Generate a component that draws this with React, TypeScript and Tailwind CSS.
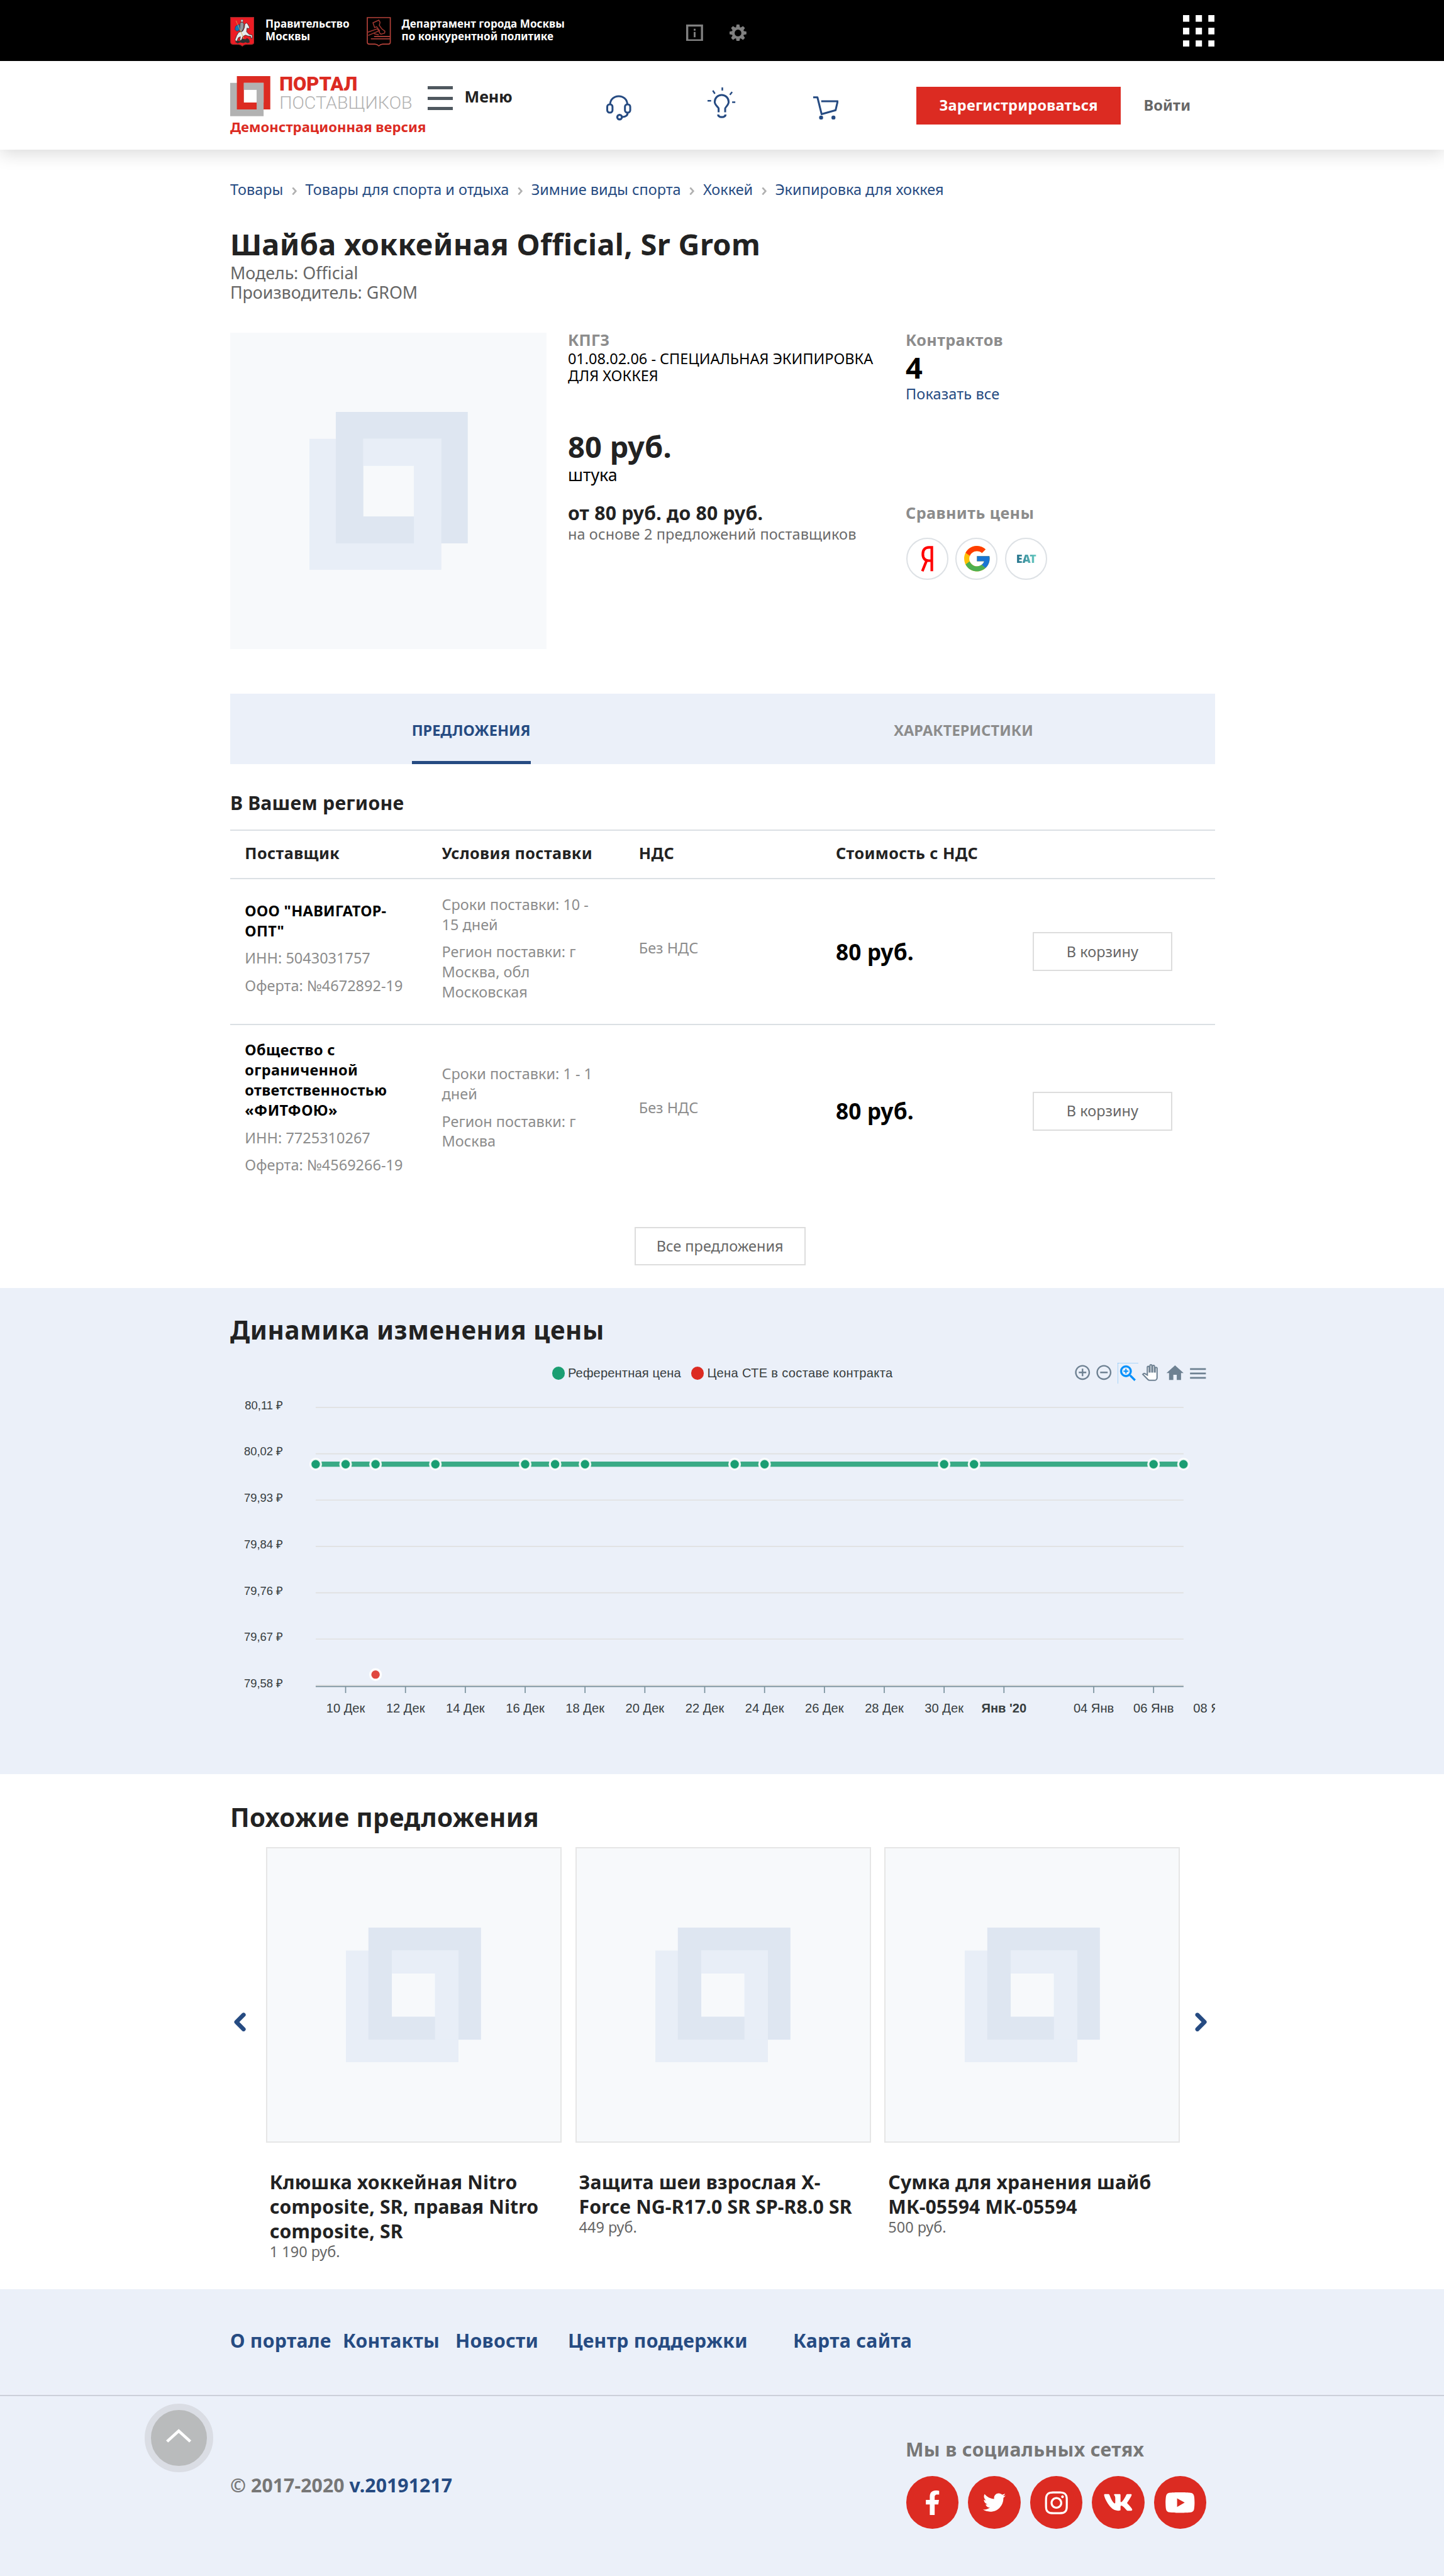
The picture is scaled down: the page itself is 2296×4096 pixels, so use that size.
import React from "react";
import { FaFacebookF, FaInstagram, FaTwitter, FaVk, FaYoutube } from "react-icons/fa";
import { FcGoogle } from "react-icons/fc";
import { MdAddCircleOutline, MdHome, MdMenu, MdRemoveCircleOutline, MdZoomIn } from "react-icons/md";

function Squares({ size, front, back }: { size: number; front: string; back: string }) {
  return (
    <svg width={size} height={size} viewBox="0 0 150 150" shapeRendering="geometricPrecision" className="block shrink-0">
      <path fill={back} fillRule="evenodd" d="M0 25.5H125V150H0ZM51 51V99H99V51Z" />
      <path fill={front} fillRule="evenodd" d="M25 0H150V124.5H25ZM51 25.5V99H125V25.5Z" />
      <path fill={back} d="M51 25.5H125V124.5H99V51H51Z" />
    </svg>
  );
}

function CityCoat() {
  return (
    <svg width="23" height="28" viewBox="0 0 23 28" className="block shrink-0">
      <path d="M.4.4h22.2v23.2q0 2.2-2.4 2.4h-5.4q-2 .2-3.3 1.6-1.3-1.4-3.3-1.6H2.8Q.4 25.8 .4 23.6Z" fill="#ed1c24" stroke="#9c2a2a" strokeWidth=".7" />
      <path d="M4.600 21.500l1.600-4L8 14.500l4-1.200 1.500-3.300L13.800 7l1.500-1.500 1.500 1.500 1.600 3-1.200 1-1.200-.5-.5 3.500 2.500 2.500 2.800.5.200 3-1.200.3-.3-2-2.700-.3-2.300-.8-2.500 1.300-1 3 .5 1.500-1.500.2-.8-2 .5-2.500-2 1-1 2.500-1.200 1z" fill="#e8eaec" stroke="#2a2a2a" strokeWidth=".5" />
      <path d="M5 9l3-2 2 1.500L9.500 12l-3 1.500L4.500 12z" fill="#1479b8" stroke="#153a55" strokeWidth=".4" />
      <path d="M9.500 5.500l2-.8 1.500 1.800-.3 4-1.700 3.500-2-1z" fill="#8e959c" stroke="#2a2a2a" strokeWidth=".4" />
      <circle cx="11.200" cy="3.600" r="1.200" fill="#cfd3d6" stroke="#2a2a2a" strokeWidth=".3" />
      <path d="M5.500 3.500l7.500 17" stroke="#d8b24a" strokeWidth=".5" />
      <path d="M4.500 23.500l3-1.200 1.500.7 2.500-2.300 3 .5 1.500-1.200 2 1.500.5 2.500-2 .8-2-.8-2 .8-3-.6-2.500.8z" fill="#2c2f30" />
    </svg>
  );
}

function DepartmentCoat() {
  return (
    <svg width="23" height="28" viewBox="0 0 23 28" fill="none" stroke="#b5423a" className="block shrink-0">
      <path d="M.6.6h21.800v23.400q0 1.600-1.800 1.700h-5.400q-2.200.2-3.700 1.700-1.500-1.500-3.700-1.700H2.400Q.6 25.600.6 24Z" strokeWidth="1" />
      <path d="M6 5.500l5.500-2.500 1.200 2-.7 3 2.300 3.200 3 2.300-.3 1.800-3.500 1-1.500-1.600.2-1.700-2.700-3.700-2 .7z" strokeWidth=".9" stroke="#a03730" />
      <path d="M1 14.500l9-3.300 1.500 2L1.500 17.500M7 15.800l4.500 1.200" strokeWidth=".9" stroke="#a03730" />
      <path d="M7 18.500h15M4 20.700h18" strokeWidth="1" />
    </svg>
  );
}

function InfoIcon() {
  return (
    <svg width="16" height="16" viewBox="0 0 16 16" className="block">
      <path d="M1 1h14v14H1z" fill="none" stroke="#808080" strokeWidth="2" />
      <path d="M7.200 7h1.700v5H7.200zM7.200 4h1.700v1.800H7.200z" fill="#808080" />
    </svg>
  );
}

function GearIcon() {
  return (
    <svg width="16" height="16" viewBox="-8 -8 16 16" className="block">
      <circle r="4.500" fill="none" stroke="#808080" strokeWidth="2.600" />
      {[0, 45, 90, 135, 180, 225, 270, 315].map((angle) => (
        <path key={angle} transform={`rotate(${angle})`} d="M-1.900-5.200L-1.300-8h2.600L1.900-5.200Z" fill="#808080" />
      ))}
    </svg>
  );
}

function AppsIcon() {
  const cells = [0, 12, 24];
  return (
    <svg width="30" height="30" viewBox="0 0 30 30" className="block">
      {cells.flatMap((y) => cells.map((x) => <rect key={`${x}-${y}`} x={x} y={y} width="6" height="6.300" fill="#fff" />))}
    </svg>
  );
}

function HeadsetIcon() {
  return (
    <svg width="24" height="25" viewBox="0 0 24 25" fill="none" stroke="#264b82" strokeWidth="1.800" className="block">
      <path d="M3.600 9.500C3.600-1.600 20-1.600 20 9.500" />
      <rect x=".9" y="9" width="5" height="7.700" rx="2.200" />
      <rect x="17.700" y="9" width="5" height="7.700" rx="2.200" />
      <path d="M20.300 16.700c0 2.400-1.800 4-5 4.100" />
      <circle cx="12.600" cy="21" r="2.200" strokeWidth="1.900" />
    </svg>
  );
}

function BulbIcon() {
  return (
    <svg width="27" height="30" viewBox="0 0 27 30" fill="none" stroke="#264b82" strokeWidth="1.800" className="block">
      <path d="M10.500 23.500v-3.500c0-1.200-3.700-3.200-3.700-6.300a6.600 6.600 0 0 1 13.200 0c0 3.100-3.300 5.100-3.300 6.300v3.500" />
      <path d="M10 25.700c.4 3.200 6.700 3.200 7.100 0" strokeWidth="2" />
      <path d="M14 0v3M5 3l2 3M23.300 4.300L21.200 7M0 12.600h3.400M23.300 14h3" strokeWidth="1.500" />
    </svg>
  );
}

function CartIcon() {
  return (
    <svg width="24" height="23" viewBox="0 0 24 23" fill="none" stroke="#264b82" strokeWidth="1.800" className="block">
      <path d="M0 1h4l4 16 13.200-3.700 2-8.500H7.600" strokeLinejoin="round" />
      <circle cx="7.500" cy="20.200" r="1.900" fill="#264b82" stroke="none" />
      <circle cx="19.200" cy="20.200" r="1.900" fill="#264b82" stroke="none" />
    </svg>
  );
}

function TopBar() {
  return (
    <div className="h-[58px] bg-black">
      <div className="ml-[218px] flex w-[933px] pt-4 text-[10.200px] leading-3 font-bold text-white">
        <CityCoat />
        <div className="ml-[10.500px] w-[96px] pt-[0.800px]">Правительство<br />Москвы</div>
        <DepartmentCoat />
        <div className="ml-[10px] w-[200px] pt-[0.800px]">Департамент города Москвы<br />по конкурентной политике</div>
        <div className="mt-[7px] ml-[69.500px]"><InfoIcon /></div>
        <div className="mt-[7px] ml-[25px]"><GearIcon /></div>
        <div className="-mt-0.5 mr-[0.500px] ml-auto"><AppsIcon /></div>
      </div>
    </div>
  );
}

function Header() {
  return (
    <header className="relative h-[84px] bg-white shadow-[0_4px_16px_rgba(0,0,0,0.15)]">
      <div className="ml-[218px] flex w-[933px] items-start">
        <div className="w-[187px]">
          <div className="mt-[14px] flex">
            <Squares size={38} front="#dc2b22" back="#b2b2b2" />
            <svg width="136" height="38" viewBox="0 0 136 38" className="ml-[9px] block shrink-0 overflow-visible">
              <text x="-0.500" y="13.500" textLength="74" lengthAdjust="spacingAndGlyphs" fontFamily="Roboto" fontWeight="900" fontSize="18.800" fill="#dc2b22">ПОРТАЛ</text>
              <text x="-0.500" y="31" textLength="126" lengthAdjust="spacingAndGlyphs" fontFamily="Roboto" fontWeight="300" fontSize="17" fill="#b2b2b2">ПОСТАВЩИКОВ</text>
            </svg>
          </div>
          <div className="text-[13.200px] leading-5 font-bold whitespace-nowrap text-[#dc2b22]">Демонстрационная версия</div>
        </div>
        <div className="mt-[23.500px] flex h-[23px] w-6 flex-col justify-between">
          <span className="h-[3px] bg-[#4f585f]" />
          <span className="h-[3px] bg-[#4f585f]" />
          <span className="h-[3px] bg-[#4f585f]" />
        </div>
        <div className="mt-[23.500px] ml-[11px] w-[122px] text-[15px] leading-5 font-bold text-[#222]">Меню</div>
        <div className="mt-8 ml-[12.500px]"><HeadsetIcon /></div>
        <div className="mt-[25px] ml-[72px]"><BulbIcon /></div>
        <div className="mt-[33px] ml-[73px]"><CartIcon /></div>
        <div className="mt-6 ml-[73.500px] flex h-9 w-[194px] items-center justify-center bg-[#dc2b22] text-[14px] font-bold tracking-[0.150px] text-white">Зарегистрироваться</div>
        <div className="mt-6 ml-[21.500px] flex h-9 items-center text-[14px] font-bold tracking-[0.150px] text-[#666]">Войти</div>
      </div>
    </header>
  );
}

const crumbs = ["Товары", "Товары для спорта и отдыха", "Зимние виды спорта", "Хоккей", "Экипировка для хоккея"];

function Breadcrumbs() {
  return (
    <nav className="flex items-center pt-[28px] text-[14px] leading-5 text-[#264b82]">
      {crumbs.map((crumb, i) => (
        <React.Fragment key={crumb}>
          {i > 0 && (
            <svg width="5" height="7" viewBox="0 0 5 7" className="mx-2 mt-0.5 block" fill="none" stroke="#b0b0b0" strokeWidth="1.600">
              <path d="M.8 .2l3 3.300-3 3.300" />
            </svg>
          )}
          <a>{crumb}</a>
        </React.Fragment>
      ))}
    </nav>
  );
}

function Product() {
  return (
    <section className="mt-[28.200px] flex h-[300px]">
      <div className="flex size-[300px] items-center justify-center bg-[#f7f9fb]">
        <Squares size={150} front="#dee6f1" back="#e8eef7" />
      </div>
      <div className="ml-5 w-[300px]">
        <div className="text-[15px] leading-[14px] font-bold tracking-[0.100px] text-[#8c8c8c]">КПГЗ</div>
        <div className="mt-[2.900px] text-[14px] leading-4 text-black">01.08.02.06 - СПЕЦИАЛЬНАЯ ЭКИПИРОВКА<br />ДЛЯ ХОККЕЯ</div>
        <div className="mt-[42.500px] text-[28px] leading-[34px] font-bold tracking-[0.100px] text-[#222]">80 руб.</div>
        <div className="text-[16px] leading-[19px] text-black">штука</div>
        <div className="mt-[14.700px] text-[18px] leading-6 font-bold tracking-[0.130px] text-[#222]">от 80 руб. до 80 руб.</div>
        <div className="text-[14px] leading-4 tracking-[0.070px] text-[#6b6b6b]">на основе 2 предложений поставщиков</div>
      </div>
      <div className="ml-5 w-[293px]">
        <div className="text-[15px] leading-[14px] font-bold tracking-[0.220px] text-[#8c8c8c]">Контрактов</div>
        <div className="mt-0.5 text-[28px] leading-[34px] font-bold text-black">4</div>
        <div className="text-[14px] leading-4 tracking-[0.070px] text-[#264b82]">Показать все</div>
        <div className="mt-[95.600px] text-[15px] leading-[18px] font-bold tracking-[0.260px] text-[#8c8c8c]">Сравнить цены</div>
        <div className="mt-[14.800px] flex gap-[7px] pl-[0.300px]">
          <div className="flex size-10 items-center justify-center rounded-full border-[1.200px] border-[#dde1e5]">
            <svg width="12" height="24" viewBox="0 0 12 24" className="block" fill="none" stroke="#f00" strokeWidth="2.500">
              <path d="M10.500 24V1.400H7.700C4 1.400 2 3.800 2 7.800S4 14 7.500 14h3M5.700 13.600L1.500 24" />
            </svg>
          </div>
          <div className="flex size-10 items-center justify-center rounded-full border-[1.200px] border-[#dde1e5]">
            <FcGoogle size={29} />
          </div>
          <div className="flex size-10 items-center justify-center rounded-full border-[1.200px] border-[#dde1e5]">
            <span className="bg-gradient-to-r from-[#24708a] to-[#6ccfc4] bg-clip-text text-[10.600px] leading-3 font-black text-transparent">ЕАТ</span>
          </div>
        </div>
      </div>
    </section>
  );
}

const offers = [
  { name: 'ООО "НАВИГАТОР-ОПТ"', inn: "5043031757", offer: "№4672892-19", term: "10 - 15 дней", region: "г Москва, обл Московская" },
  { name: "Общество с ограниченной ответственностью «ФИТФОЮ»", inn: "7725310267", offer: "№4569266-19", term: "1 - 1 дней", region: "г Москва" },
];

function Offers() {
  return (
    <section>
      <div className="mt-[42px] flex h-[67px] justify-around bg-[#ebf0f9] text-[14px] font-bold">
        <div className="flex h-[67px] items-center border-b-[3px] border-[#264b82] pt-[6px] text-[#264b82]">ПРЕДЛОЖЕНИЯ</div>
        <div className="flex h-[67px] items-center border-b-[3px] border-transparent pt-[6px] tracking-[0.080px] text-[#8c8c8c]">ХАРАКТЕРИСТИКИ</div>
      </div>
      <h2 className="mt-[24.800px] text-[18px] leading-6 font-bold tracking-[0.130px] text-[#222]">В Вашем регионе</h2>
      <div className="mt-[13px] grid h-[47.200px] grid-cols-5 items-center border-y-[1.200px] border-[#dbe0e4] pb-[1.300px] text-[15px] font-bold tracking-[0.250px] text-[#222]">
        <div className="pl-[14px]">Поставщик</div>
        <div className="pl-[14px]">Условия поставки</div>
        <div className="pl-[14px]">НДС</div>
        <div className="pl-[14px]">Стоимость с НДС</div>
        <div />
      </div>
      {offers.map((o, i) => (
        <div
          key={o.inn}
          className={
            "grid grid-cols-5 items-center pt-[14.700px] pb-[13.100px] text-[14px] leading-[19px] text-[#8c8c8c] " +
            (i === 0 ? "border-b-[1.200px] border-[#dbe0e4]" : "")
          }
        >
          <div className="px-[14px]">
            <p className="mb-[7px] font-bold tracking-[0.200px] text-black">{o.name}</p>
            <p className="mb-[7px]">{`ИНН: ${o.inn}`}</p>
            <p className="mb-[7px] whitespace-nowrap">{`Оферта: ${o.offer}`}</p>
          </div>
          <div className="px-[14px]">
            <p className="mb-[7px]">{`Сроки поставки: ${o.term}`}</p>
            <p className="mb-[7px]">{`Регион поставки: ${o.region}`}</p>
          </div>
          <div className="px-[14px]"><p className="mb-[7px]">Без НДС</p></div>
          <div className="px-[14px] pb-[1px] text-[21px] leading-7 font-bold tracking-[0.100px] text-black">80 руб.</div>
          <div className="px-[14px] pb-[1px]">
            <div className="flex h-[37px] w-[132px] items-center justify-center border-[1.200px] border-[#ddd] pt-[0.800px] text-[#666]">В корзину</div>
          </div>
        </div>
      ))}
      <div className="mt-[28.500px] mr-[5px] flex justify-center">
        <div className="flex h-[36.500px] w-[162px] items-center justify-center border-[1.200px] border-[#ddd] pt-[0.800px] text-[14px] text-[#666]">Все предложения</div>
      </div>
    </section>
  );
}

const gridLabels = ["80,11", "80,02", "79,93", "79,84", "79,76", "79,67", "79,58"];
const refDays = [0, 1, 2, 4, 7, 8, 9, 14, 15, 21, 22, 28, 29];
const dayTicks: [number, string][] = [
  [1, "10 Дек"], [3, "12 Дек"], [5, "14 Дек"], [7, "16 Дек"], [9, "18 Дек"], [11, "20 Дек"], [13, "22 Дек"], [15, "24 Дек"],
  [17, "26 Дек"], [19, "28 Дек"], [21, "30 Дек"], [23, "Янв '20"], [26, "04 Янв"], [28, "06 Янв"], [30, "08 Янв"],
];
const dayX = (d: number) => 81 + d * 28.350;

function PriceChart() {
  return (
    <section className="h-[461px] bg-[#ebf0f9] pt-[24.200px]">
      <div className="ml-[218px] w-[933px]">
        <h2 className="text-[24px] leading-8 font-bold tracking-[0.340px] text-[#222]">Динамика изменения цены</h2>
        <div className="mt-[9.800px] flex h-[30px] items-center font-['Liberation_Sans',sans-serif] text-[12px] leading-[14px] text-[#373d3f]">
          <span className="ml-[305px] size-3 rounded-full bg-[#1b9e72]" />
          <span className="ml-[3px] w-[108px] tracking-[0.080px] whitespace-nowrap">Референтная цена</span>
          <span className="ml-[9px] size-3 rounded-full bg-[#dc2b22]" />
          <span className="ml-[3px] tracking-[0.180px] whitespace-nowrap">Цена СТЕ в составе контракта</span>
          <div className="mr-[8.800px] ml-auto flex items-center text-[#6e8192]">
            <MdAddCircleOutline size={17} className="-mt-0.5" />
            <MdRemoveCircleOutline size={17} className="-mt-0.5 ml-[3px]" />
            <MdZoomIn size={20} className="ml-[4.500px] text-[#008ffb]" stroke="currentColor" strokeWidth=".4" />
            <svg width="16" height="16" viewBox="-1 -1 26 26" className="-mt-px ml-[2.500px] block" fill="#fff" stroke="#6e8192" strokeWidth="2">
              <path d="M23 5.500V20c0 2.200-1.800 4-4 4h-7.300c-1.080 0-2.100-.43-2.850-1.190L1 14.830s1.260-1.230 1.300-1.250c.22-.19.49-.29.79-.29.22 0 .42.06.6.16.04.01 4.310 2.460 4.310 2.460V4c0-.83.67-1.500 1.500-1.500S11 3.170 11 4v7h1V1.500c0-.83.67-1.500 1.500-1.500S15 .67 15 1.500V11h1V2.500c0-.83.67-1.500 1.500-1.500s1.500.67 1.500 1.500V11h1V5.500c0-.83.67-1.500 1.500-1.500s1.500.67 1.500 1.500z" />
            </svg>
            <MdHome size={19.500} className="ml-[6px]" />
            <MdMenu size={20} className="ml-0.5 -mr-[2.500px]" />
          </div>
        </div>
        <svg width="933" height="324" viewBox="0 0 933 324" className="block overflow-hidden" fontFamily="'Liberation Sans', sans-serif">
          {gridLabels.map((label, i) => (
            <g key={label}>
              <path d={`M81 ${17.200 + i * 43.900}H903.200`} stroke="#e0e0e0" />
              <text x="50.200" y={18.800 + i * 43.950} fontSize="11" textAnchor="end" fill="#373d3f">{`${label} ₽`}</text>
            </g>
          ))}
          <path d="M81 281.600H903.200" stroke="#78909c" />
          {dayTicks.map(([d, label]) => (
            <g key={label}>
              {d < 30 && <path d={`M${dayX(d)} 281.600v6.200`} stroke="#78909c" />}
              <text x={dayX(d)} y="306" fontSize="12" fontWeight={d === 23 ? 700 : 400} textAnchor="middle" fill="#373d3f">{label}</text>
            </g>
          ))}
          <path d="M81 71H903.200" stroke="#1b9e72" strokeOpacity=".85" strokeWidth="5" />
          {refDays.map((d) => (
            <circle key={d} cx={dayX(d)} cy="71" r="5" fill="#1b9e72" stroke="#fff" strokeOpacity=".9" strokeWidth="2" />
          ))}
          <circle cx={dayX(2)} cy="270.300" r="5" fill="#e0483f" stroke="#fff" strokeWidth="2" />
        </svg>
      </div>
    </section>
  );
}

const similar = [
  { title: "Клюшка хоккейная Nitro composite, SR, правая Nitro composite, SR", price: "1 190 руб." },
  { title: "Защита шеи взрослая X-Force NG-R17.0 SR SP-R8.0 SR", price: "449 руб." },
  { title: "Сумка для хранения шайб МК-05594 МК-05594", price: "500 руб." },
];

function Arrow({ flip }: { flip?: boolean }) {
  return (
    <svg width="12" height="18" viewBox="0 0 12 18" className={"mt-[156.500px] block shrink-0 " + (flip ? "rotate-180" : "")} fill="none" stroke="#264b82" strokeWidth="4">
      <path d="M9.700 2.200L2.900 9l6.800 6.800" strokeLinejoin="round" strokeLinecap="round" />
    </svg>
  );
}

function Similar() {
  return (
    <section className="ml-[218px] h-[488px] w-[933px] pt-[24.700px]">
      <h2 className="text-[24px] leading-8 font-bold tracking-[0.230px] text-[#222]">Похожие предложения</h2>
      <div className="mt-[12.300px] flex items-start pl-[3px]">
        <Arrow />
        <div className="mr-[14px] ml-[19px] flex gap-[13px]">
          {similar.map((s) => (
            <div key={s.title} className="w-[280px]">
              <div className="flex size-[280px] items-center justify-center border-[1.200px] border-[#e6e6e6] bg-[#f7f9fb]">
                <Squares size={128} front="#dee6f1" back="#e8eef7" />
              </div>
              <div className="mt-[25.700px] px-[3.500px] text-[18px] leading-[23.300px] font-bold tracking-[0.080px] text-[#222]">{s.title}</div>
              <div className="px-[3.500px] text-[14px] leading-4 text-[#666]">{s.price}</div>
            </div>
          ))}
        </div>
        <Arrow flip />
      </div>
    </section>
  );
}

function Footer() {
  return (
    <footer className="relative h-[271.500px] bg-[#ebf0f9] text-[18px] leading-6 font-bold tracking-[0.170px]">
      <div className="h-[101px] border-b-[1.200px] border-[#ccd0da] pt-[36.500px]">
        <div className="ml-[218px] flex w-[933px] text-[#264b82]">
          <a className="w-[106.700px]">О портале</a>
          <a className="w-[106.700px]">Контакты</a>
          <a className="w-[106.600px]">Новости</a>
          <a className="w-[213.300px]">Центр поддержки</a>
          <a>Карта сайта</a>
        </div>
      </div>
      <div className="ml-[218px] flex w-[933px] text-[#777]">
        <div className="w-[640px] pt-[72.600px] tracking-[0.050px]">© 2017-2020 <span className="text-[#264b82]">v.20191217</span></div>
        <div className="pt-[38.700px]">
          <div className="tracking-[0.220px]">Мы в социальных сетях</div>
          <div className="mt-[13.300px] flex gap-[8.700px] pl-[0.300px] text-white">
            <div className="flex size-[50px] items-center justify-center rounded-full bg-[#dc2b22]"><FaFacebookF size={23.500} /></div>
            <div className="flex size-[50px] items-center justify-center rounded-full bg-[#dc2b22]"><FaTwitter size={21.500} /></div>
            <div className="flex size-[50px] items-center justify-center rounded-full bg-[#dc2b22]"><FaInstagram size={24.700} /></div>
            <div className="flex size-[50px] items-center justify-center rounded-full bg-[#dc2b22]"><FaVk size={28.500} /></div>
            <div className="flex size-[50px] items-center justify-center rounded-full bg-[#dc2b22]"><FaYoutube size={29} /></div>
          </div>
        </div>
      </div>
      <div className="absolute top-[108px] left-[137px] flex size-[65px] items-center justify-center rounded-full border-[6px] border-[#dadde4] bg-[#b9bbbc]">
        <svg width="24" height="13" viewBox="0 0 24 13" className="-mt-1 block" fill="none" stroke="#fff" strokeWidth="2.800">
          <path d="M1 12L12 2l11 10" />
        </svg>
      </div>
    </footer>
  );
}

export default function App() {
  return (
    <div className="w-[1368px] bg-white font-['Noto_Sans',sans-serif] [zoom:1.67836]">
      <TopBar />
      <Header />
      <div className="ml-[218px] h-[1078px] w-[933px]">
        <Breadcrumbs />
        <h1 className="mt-[24px] text-[28px] leading-[35px] font-bold tracking-[0.200px] text-[#222] [font-variant-ligatures:common-ligatures]">Шайба хоккейная Official, Sr Grom</h1>
        <div className="-mt-[0.200px] text-[16px] leading-[19px] text-[#666]">Модель: Official<br />Производитель: GROM</div>
        <Product />
        <Offers />
      </div>
      <PriceChart />
      <Similar />
      <Footer />
    </div>
  );
}
